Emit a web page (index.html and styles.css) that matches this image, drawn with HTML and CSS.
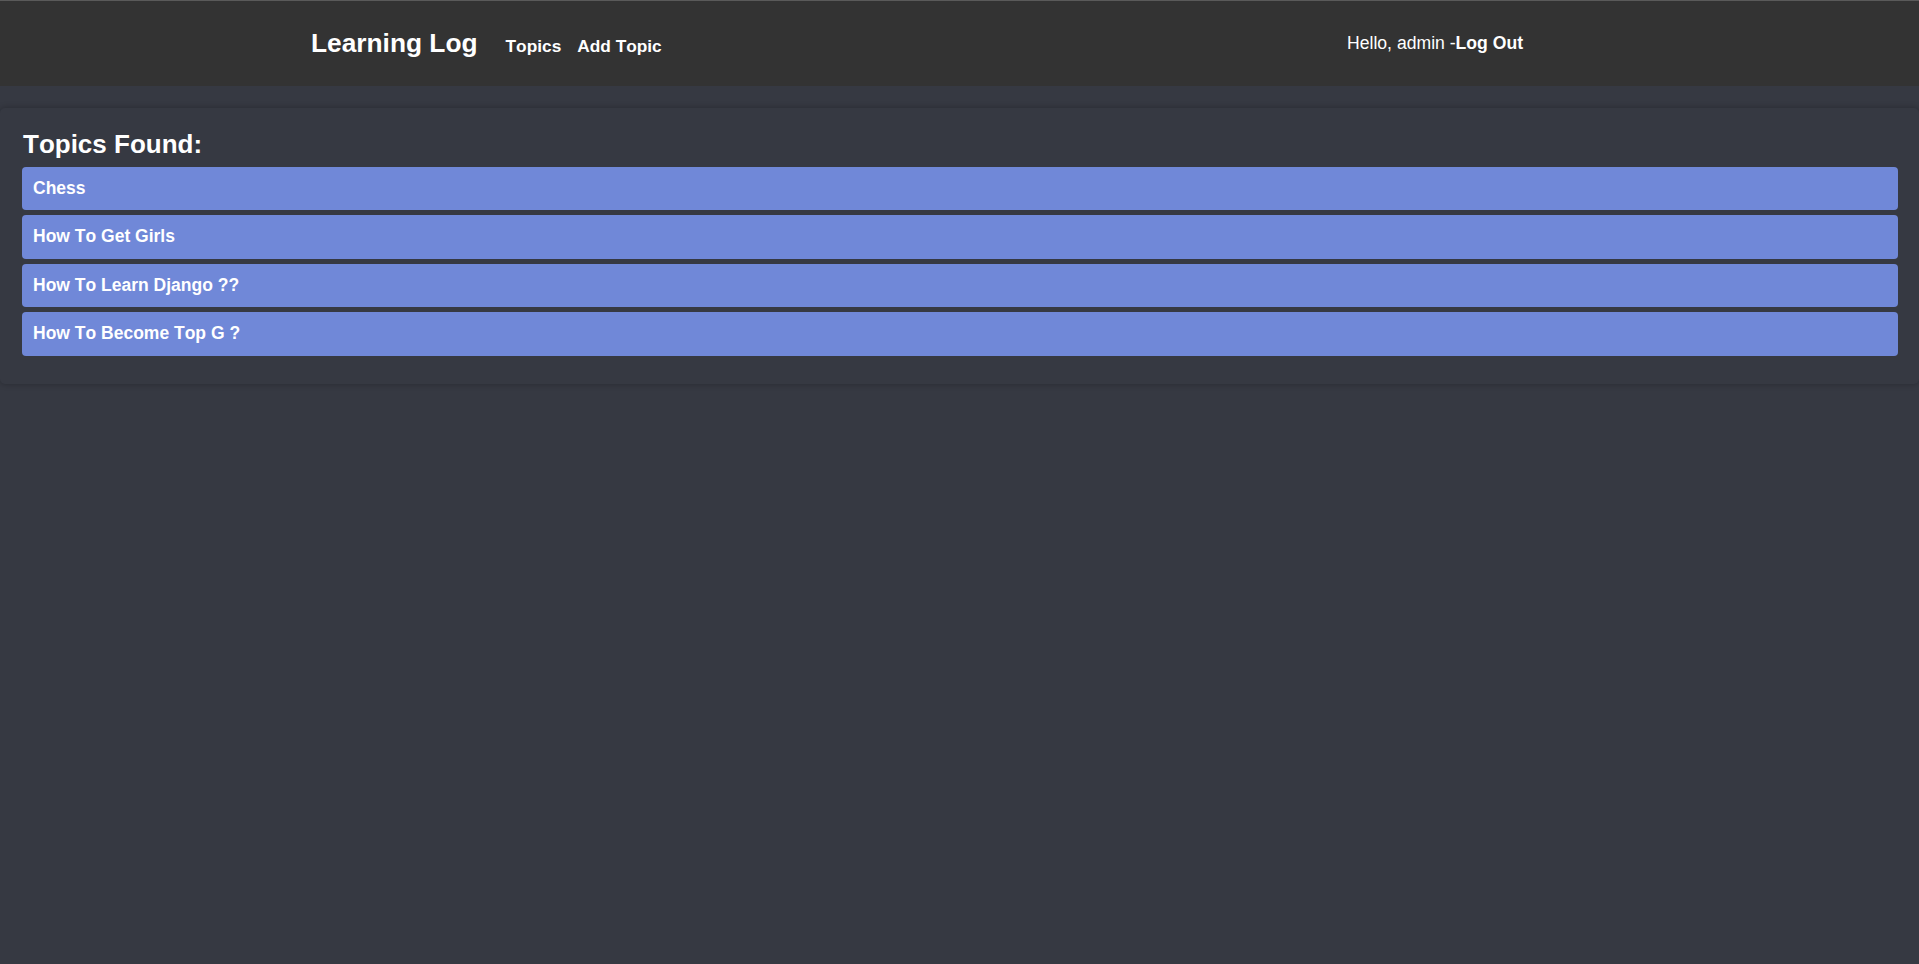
FILE: index.html
```html
<!DOCTYPE html>
<html lang="en">
<head>
<meta charset="utf-8">
<title>Learning Log</title>
<link rel="stylesheet" href="styles.css">
</head>
<body>
<header class="topbar">
  <div class="brand-group">
    <a class="brand" href="#">Learning Log</a>
    <nav class="nav">
      <a class="nav-link" href="#">Topics</a>
      <a class="nav-link" href="#">Add Topic</a>
    </nav>
  </div>
  <div class="user">Hello, admin -<a class="logout" href="#">Log Out</a></div>
</header>
<main class="main">
  <section class="card">
    <h1 class="card-title">Topics Found:</h1>
    <ul class="topic-list">
      <li class="topic"><a href="#">Chess</a></li>
      <li class="topic"><a href="#">How To Get Girls</a></li>
      <li class="topic"><a href="#">How To Learn Django ??</a></li>
      <li class="topic"><a href="#">How To Become Top G ?</a></li>
    </ul>
  </section>
</main>
</body>
</html>
```

FILE: styles.css
```css
html, body {
  margin: 0;
  padding: 0;
}
body {
  background: #363942;
  font-family: "Liberation Sans", Arial, sans-serif;
  font-kerning: none;
  color: #ffffff;
  min-height: 964px;
}
a {
  color: #ffffff;
  text-decoration: none;
}
.topbar {
  box-sizing: border-box;
  height: 86px;
  background: #333333;
  border-top: 1px solid #5a5a5a;
  display: flex;
  align-items: center;
  padding-left: 311px;
  padding-bottom: 1px;
}
.brand-group {
  display: flex;
  align-items: baseline;
}
.brand {
  font-size: 26.3px;
  font-weight: 700;
  margin-right: 28px;
}
.nav {
  display: flex;
  gap: 16px;
}
.nav-link {
  font-size: 17.3px;
  font-weight: 700;
}
.user {
  margin-left: auto;
  margin-right: 396px;
  font-size: 17.6px;
  padding-top: 1px;
}
.logout {
  font-weight: 700;
}
.main {
  padding-top: 22px;
}
.card {
  background: #363942;
  border-radius: 5px;
  box-shadow: 0 0 6px rgba(0, 0, 0, 0.28);
  padding: 22px 21px 28px 22px;
}
.card-title {
  margin: 0 0 8px 1px;
  font-size: 26px;
  font-weight: 700;
  line-height: 29px;
}
.topic-list {
  list-style: none;
  margin: 0;
  padding: 0;
  display: flex;
  flex-direction: column;
  gap: 5px;
}
.topic {
  background: #7088d8;
  border-radius: 4px;
  padding: 12px 11px;
  font-size: 17.5px;
  font-weight: 700;
  line-height: 19.4px;
}
```
